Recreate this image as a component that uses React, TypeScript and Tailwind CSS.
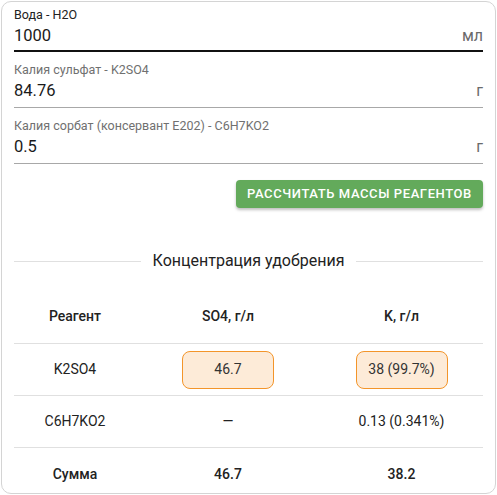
import React from "react";

type Field = { label: string; value: string; unit: string; focused?: boolean };

const FIELDS: Field[] = [
  { label: "Вода - H2O", value: "1000", unit: "мл", focused: true },
  { label: "Калия сульфат - K2SO4", value: "84.76", unit: "г" },
  { label: "Калия сорбат (консервант E202) - C6H7KO2", value: "0.5", unit: "г" },
];

function InputField({ field, first }: { field: Field; first: boolean }) {
  return (
    <div
      className={
        (first ? "pt-[5px] pb-[3px] border-b-2 border-[#111]" : "pt-[10px] pb-[5px] border-b border-[#a8a8a8]") +
        " flex flex-col"
      }
    >
      <div className={"text-[12.5px] leading-4 " + (field.focused ? "text-[#222]" : "text-[#707070]")}>
        {field.label}
      </div>
      <div className="flex items-baseline justify-between h-6 pt-[1px]">
        <span className="text-[16.5px] leading-6 text-[#1a1a1a]">{field.value}</span>
        <span className="text-[16px] leading-6 text-[#6a6a6a]">{field.unit}</span>
      </div>
    </div>
  );
}

function Chip({ children }: { children: React.ReactNode }) {
  return (
    <div className="w-[92px] h-[38px] rounded-lg border border-[#f3952a] bg-[#fdebd8] flex items-center justify-center text-[14px] text-[#333]">
      {children}
    </div>
  );
}

const ROWS = [
  { name: "K2SO4", so4: <Chip>46.7</Chip>, k: <Chip>38 (99.7%)</Chip> },
  { name: "C6H7KO2", so4: "—", k: "0.13 (0.341%)" },
];

export default function App() {
  return (
    <div className="w-[497px] h-[495px] bg-white" style={{ fontFamily: "Roboto, 'Noto Sans', sans-serif" }}>
      <div className="ml-[1px] mt-[1px] w-[495px] h-[493px] rounded-[10px] border border-[#d4d4d4] px-3 overflow-hidden flex flex-col">
        {FIELDS.map((f, i) => (
          <InputField key={f.label} field={f} first={i === 0} />
        ))}

        <div className="flex justify-end mt-4">
          <button className="w-[247px] h-[28px] rounded bg-[#63aa5b] text-white text-[13px] font-medium tracking-[0.045em] uppercase shadow-[0_2px_3px_rgba(0,0,0,0.25)]">
            Рассчитать массы реагентов
          </button>
        </div>

        <div className="mt-[41px] h-6 flex items-center gap-3">
          <div className="flex-1 h-px bg-[#e0e0e0]" />
          <span className="text-[16px] text-[#222] leading-6">Концентрация удобрения</span>
          <div className="flex-1 h-px bg-[#e0e0e0]" />
        </div>

        <div className="mt-4 shrink-0 grid grid-cols-[122px_184px_1fr] text-[14px] text-[#222]">
          <div className="h-[55px] flex items-center justify-center font-medium border-b border-[#e0e0e0]">Реагент</div>
          <div className="h-[55px] flex items-center justify-center font-medium border-b border-[#e0e0e0]">SO4, г/л</div>
          <div className="h-[55px] flex items-center justify-center font-medium border-b border-[#e0e0e0]">K, г/л</div>

          {ROWS.map((r) => (
            <React.Fragment key={r.name}>
              <div className="h-[52px] flex items-center justify-center border-b border-[#e0e0e0]">{r.name}</div>
              <div className="h-[52px] flex items-center justify-center border-b border-[#e0e0e0]">{r.so4}</div>
              <div className="h-[52px] flex items-center justify-center border-b border-[#e0e0e0]">{r.k}</div>
            </React.Fragment>
          ))}

          <div className="h-[53px] flex items-center justify-center font-medium">Сумма</div>
          <div className="h-[53px] flex items-center justify-center font-medium">46.7</div>
          <div className="h-[53px] flex items-center justify-center font-medium">38.2</div>
        </div>
      </div>
    </div>
  );
}
